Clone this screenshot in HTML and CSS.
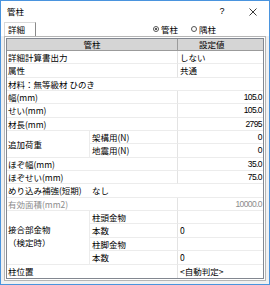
FILE: index.html
```html
<!DOCTYPE html>
<html lang="ja">
<head>
<meta charset="utf-8">
<link rel="stylesheet" href="styles.css">
</head>
<body>
<div class="window">
  <div class="titlebar">
    <span class="title">管柱</span>
    <span class="help">?</span>
    <span class="close"><svg width="8" height="8" viewBox="0 0 8 8"><path d="M0.5 0.5 L7.5 7.5 M7.5 0.5 L0.5 7.5" stroke="#222" stroke-width="0.9" fill="none"/></svg></span>
  </div>
  <div class="tabstrip">
    <div class="tab">詳細</div>
    <div class="radios">
      <span class="radio"><span class="dot on"></span>管柱</span>
      <span class="radio"><span class="dot"></span>隅柱</span>
    </div>
  </div>
  <div class="panel">
    <div class="list">
      <div class="grid">
        <div class="hd hd-left">管柱</div>
        <div class="hd hd-right">設定値</div>

        <div class="c s2">詳細計算書出力</div>
        <div class="c v">しない</div>

        <div class="c s2">属性</div>
        <div class="c v">共通</div>

        <div class="c s3">材料：無等級材 ひのき</div>

        <div class="c s2">幅(mm)</div>
        <div class="c n">105.0</div>

        <div class="c s2">せい(mm)</div>
        <div class="c n">105.0</div>

        <div class="c s2">材長(mm)</div>
        <div class="c n">2795</div>

        <div class="c g r2">追加荷重</div>
        <div class="c sub">架構用(N)</div>
        <div class="c n">0</div>
        <div class="c sub">地震用(N)</div>
        <div class="c n">0</div>

        <div class="c s2">ほぞ幅(mm)</div>
        <div class="c n">35.0</div>

        <div class="c s2">ほぞせい(mm)</div>
        <div class="c n">75.0</div>

        <div class="c">めり込み補強(短期)</div>
        <div class="c sub s2b">なし</div>

        <div class="c s2 dim">有効面積(mm2)</div>
        <div class="c n dim">10000.0</div>

        <div class="c g r4 two"><span class="stack"><span>接合部金物</span><span>（検定時）</span></span></div>
        <div class="c sub">柱頭金物</div>
        <div class="c v"></div>
        <div class="c sub">本数</div>
        <div class="c v">0</div>
        <div class="c sub">柱脚金物</div>
        <div class="c v"></div>
        <div class="c sub">本数</div>
        <div class="c v">0</div>

        <div class="c s2 last">柱位置</div>
        <div class="c v last">&lt;自動判定&gt;</div>
      </div>
    </div>
  </div>
</div>
</body>
</html>
```

FILE: styles.css
```css
html, body {
  margin: 0;
  padding: 0;
  background: #ffffff;
}

body {
  font-family: "Noto Sans CJK JP", "Noto Sans", sans-serif;
  font-size: 8.5px;
  color: #000;
}

.window {
  box-sizing: border-box;
  width: 270px;
  height: 285px;
  border: 1px solid #4a94de;
  background: #f0f0f0;
  display: flex;
  flex-direction: column;
}

.titlebar {
  height: 21px;
  flex: none;
  background: #ffffff;
  display: flex;
  align-items: center;
  padding: 0 11px 0 6px;
}

.title {
  flex: 1;
  line-height: 1;
}

.help {
  width: 10px;
  text-align: center;
  font-family: "Liberation Sans", sans-serif;
  font-size: 9px;
  line-height: 1;
}

.close {
  width: 10px;
  margin-left: 21px;
  display: flex;
  justify-content: center;
  align-items: center;
}

.close svg {
  display: block;
}

.tabstrip {
  height: 14px;
  flex: none;
  display: flex;
  align-items: flex-end;
  padding-left: 3px;
  background: #ffffff;
}

.tab {
  box-sizing: border-box;
  width: 32px;
  height: 14px;
  background: #ffffff;
  border: 1px solid #d9d9d9;
  border-right: 1px solid #8a8a8a;
  border-bottom: none;
  padding-left: 3px;
  display: flex;
  align-items: center;
  line-height: 1;
}

.radios {
  margin-left: auto;
  margin-right: 53px;
  display: flex;
  align-items: center;
  height: 14px;
  gap: 13px;
}

.radio {
  display: flex;
  align-items: center;
  gap: 2px;
  line-height: 1;
}

.dot {
  box-sizing: border-box;
  width: 6px;
  height: 6px;
  border: 1px solid #555;
  border-radius: 50%;
  background: #fff;
  display: flex;
  align-items: center;
  justify-content: center;
}

.dot.on::after {
  content: "";
  width: 2px;
  height: 2px;
  border-radius: 50%;
  background: #222;
}

.panel {
  flex: none;
  margin: 0 3px 0 3px;
  border: 1px solid #b5b5b5;
  padding: 1px;
  background: #ffffff;
}

.list {
  border: 1px solid #828790;
  background: #ffffff;
}

.grid {
  display: grid;
  grid-template-columns: 83px 88px 85px;
  grid-template-rows: 12px;
  grid-auto-rows: 13.35px;
}

.hd {
  box-sizing: border-box;
  background: #d5d5d5;
  border-bottom: 1px solid #9b9b9b;
  display: flex;
  align-items: center;
  line-height: 1;
}

.hd-left {
  grid-column: span 2;
  justify-content: center;
  border-right: 1px solid #9b9b9b;
}

.hd-right {
  padding-left: 21px;
}

.c {
  box-sizing: border-box;
  display: flex;
  align-items: center;
  padding-left: 1px;
  border-bottom: 1px solid #ececec;
  white-space: nowrap;
  overflow: hidden;
  line-height: 1;
}

.s2 {
  grid-column: span 2;
  border-right: 1px solid #e3e3e3;
}

.s3 {
  grid-column: span 3;
}

.s2b {
  grid-column: span 2;
}

.r2 {
  grid-row: span 2;
}

.r4 {
  grid-row: span 4;
}

.g {
  border-right: 1px solid #ececec;
}

.sub {
  padding-left: 2px;
  border-right: 1px solid #e3e3e3;
}

.s2b.sub {
  border-right: none;
}

.v {
  padding-left: 2px;
}

.n {
  justify-content: flex-end;
  padding-right: 1px;
  font-family: "Liberation Sans", sans-serif;
  letter-spacing: -0.6px;
}

.dim {
  color: #8c8c8c;
}

.two {
  padding-bottom: 3px;
}

.stack {
  display: flex;
  flex-direction: column;
  line-height: 12.4px;
}

.last {
  border-bottom: none;
}
```
